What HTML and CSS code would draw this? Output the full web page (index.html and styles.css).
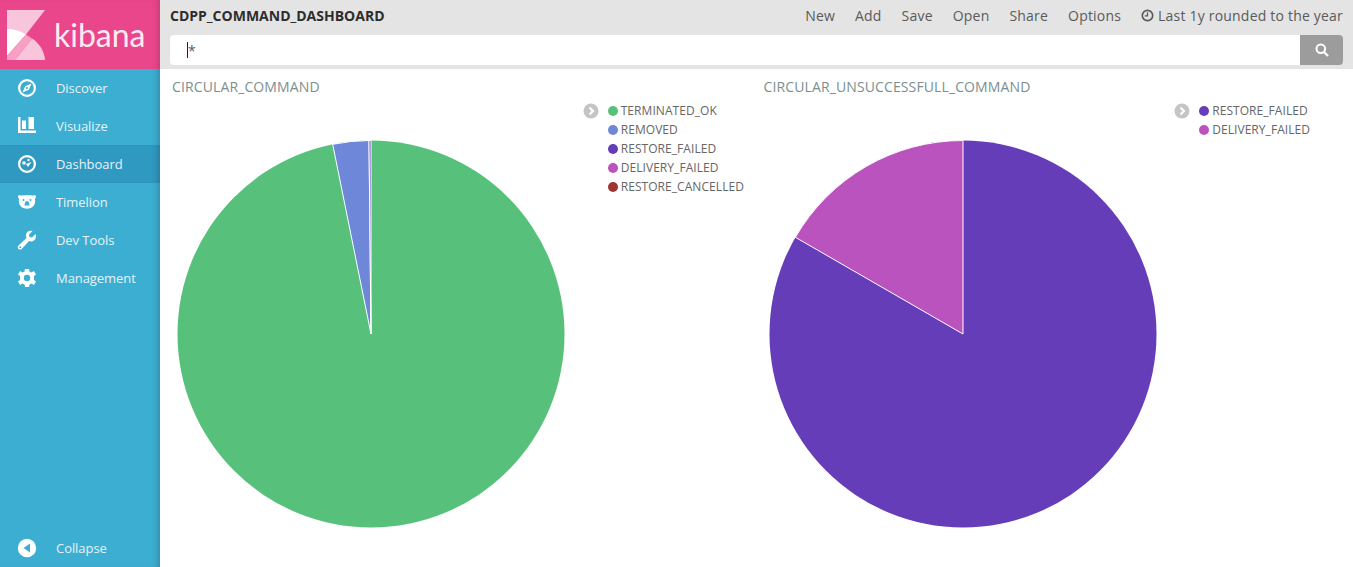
FILE: index.html
```html
<!DOCTYPE html>
<html lang="en">

<head>
    <meta charset="UTF-8">
    <title>CDPP_COMMAND_DASHBOARD - Kibana</title>
    <link rel="stylesheet" href="styles.css">
</head>

<body>
    <aside class="sidebar">
        <div class="logo">
            <svg class="logo-mark" viewBox="0 0 38 50" width="38" height="50">
                <polygon points="0,0 38,0 19,24.500 0,19" fill="#f9c5dc" />
                <path d="M0 19 C7 19 14 21 19 24.500 L0 46 Z" fill="#fff" />
                <path d="M25 28.500 C32 33 37.500 41 38 50 L8 50 Z" fill="#f9c5dc" />
                <polygon points="19,24.500 25,28.500 8,50 0,50 0,46" fill="#f5a0c4" />
            </svg>
            <span class="logo-text">kibana</span>
        </div>
        <nav class="nav">
            <a class="nav-item">
                <svg class="nav-icon" viewBox="0 0 20 20"><circle cx="10" cy="10" r="7.900" fill="none" stroke="#fff" stroke-width="2.200" /><path d="M14.500 5.500 L11.800 11.800 L5.500 14.500 L8.200 8.200 Z M10 9 A1 1 0 1 0 10 11 A1 1 0 1 0 10 9 Z" fill="#fff" fill-rule="evenodd" /></svg>
                Discover
            </a>
            <a class="nav-item">
                <svg class="nav-icon" viewBox="0 0 20 20"><path d="M1 1 H3.500 V14.500 H19 V17 H1 Z" fill="#fff" /><path d="M5 4.500 H9 V13 H5 Z M11.500 1 H17 V13 H11.500 Z" fill="#fff" /></svg>
                Visualize
            </a>
            <a class="nav-item active">
                <svg class="nav-icon" viewBox="0 0 20 20"><circle cx="10" cy="10" r="7.900" fill="none" stroke="#fff" stroke-width="2.200" /><circle cx="7" cy="9" r="1.800" fill="#fff" /><circle cx="11.500" cy="6" r="1.200" fill="#fff" /><path d="M9 10 L14.500 8 L11 13 Z" fill="#fff" /></svg>
                Dashboard
            </a>
            <a class="nav-item">
                <svg class="nav-icon" viewBox="0 0 20 20"><path d="M1 4.500 C1 3.300 2.500 2.800 3.500 3.500 C7 3 13 3 16.500 3.500 C17.500 2.800 19 3.300 19 4.500 C19 5.500 18.500 6 18 6.500 C18.500 10 18 13 15.500 15 C12.500 17.200 7.500 17.200 4.500 15 C2 13 1.500 10 2 6.500 C1.500 6 1 5.500 1 4.500 Z" fill="#fff" /><circle cx="6.500" cy="8" r="1" fill="#3caed2" /><circle cx="13.500" cy="8" r="1" fill="#3caed2" /><path d="M10 9 C11.500 9 12.500 11 12.500 13.500 H7.500 C7.500 11 8.500 9 10 9 Z" fill="#3caed2" /></svg>
                Timelion
            </a>
            <a class="nav-item">
                <svg class="nav-icon" viewBox="0 0 20 20"><path d="M18.500 4 L15 7.500 L12.500 7 L12 4.500 L15.500 1 C12.500 0 9.500 1.500 9 4.500 C8.800 5.800 9 7 9.500 8 L1.500 15.500 C0.300 16.700 0.800 18.300 1.500 19 C2.400 19.800 3.800 19.800 4.700 19 L12 11 C13.200 11.500 14.500 11.600 15.700 11.200 C18.500 10.200 19.700 7 18.500 4 Z" fill="#fff" /><circle cx="3.200" cy="17.300" r="1" fill="#3caed2" /></svg>
                Dev Tools
            </a>
            <a class="nav-item">
                <svg class="nav-icon" viewBox="0 0 20 20"><path d="M8 1 H12 L12.500 3.600 L14.600 4.500 L16.900 3.100 L19 6.500 L16.900 8 V12 L19 13.500 L16.900 16.900 L14.600 15.500 L12.500 16.400 L12 19 H8 L7.500 16.400 L5.400 15.500 L3.100 16.900 L1 13.500 L3.100 12 V8 L1 6.500 L3.100 3.100 L5.400 4.500 L7.500 3.600 Z" fill="#fff" /><circle cx="10" cy="10" r="3.200" fill="#3caed2" /></svg>
                Management
            </a>
        </nav>
        <a class="nav-item collapse">
            <svg class="nav-icon" viewBox="0 0 20 20"><circle cx="10" cy="10" r="9.200" fill="#fff" /><path d="M13 5.500 V14.500 L6.500 10 Z" fill="#3caed2" /></svg>
            Collapse
        </a>
    </aside>

    <main class="content">
        <header class="topbar">
            <div class="topbar-row">
                <span class="dash-title">CDPP_COMMAND_DASHBOARD</span>
                <div class="menu">
                    <a>New</a>
                    <a>Add</a>
                    <a>Save</a>
                    <a>Open</a>
                    <a>Share</a>
                    <a>Options</a>
                    <a class="time">
                        <svg viewBox="0 0 14 14" width="13" height="13"><circle cx="7" cy="7" r="5.600" fill="none" stroke="#5a5a5a" stroke-width="1.800" /><path d="M7 3.500 V7.500 H4" fill="none" stroke="#5a5a5a" stroke-width="1.400" /></svg>
                        Last 1y rounded to the year
                    </a>
                </div>
            </div>
            <div class="search">
                <div class="search-input"><span class="caret"></span>*</div>
                <button class="search-button">
                    <svg viewBox="0 0 14 14" width="14" height="14"><circle cx="5.800" cy="5.800" r="4.300" fill="none" stroke="#fff" stroke-width="2" /><path d="M9 9 L13 13" stroke="#fff" stroke-width="2.400" /></svg>
                </button>
            </div>
        </header>

        <section class="panels">
            <div class="panel">
                <h2 class="panel-title">CIRCULAR_COMMAND</h2>
                <div class="panel-body">
                    <div class="chart">
                        <svg viewBox="-194 -194 388 388" width="388" height="388">
                            <circle r="193.500" fill="#57c17b" />
                            <path d="M0 0 L-38.300 -189.700 A193.500 193.500 0 0 1 -2 -193.500 Z" fill="#6f87d8" stroke="#fff" />
                            <path d="M0 0 L-2 -193.500 A193.500 193.500 0 0 1 0 -193.500 Z" fill="#663db8" stroke="#fff" />
                        </svg>
                    </div>
                    <div class="legend">
                        <span class="legend-toggle"><svg viewBox="0 0 16 16" width="16" height="16"><circle cx="8" cy="8" r="7.500" fill="#c4c4c4" /><path d="M6.500 4.500 L10 8 L6.500 11.500" fill="none" stroke="#fff" stroke-width="2.200" /></svg></span>
                        <ul class="legend-list">
                            <li><i class="dot green"></i>TERMINATED_OK</li>
                            <li><i class="dot blue"></i>REMOVED</li>
                            <li><i class="dot purple"></i>RESTORE_FAILED</li>
                            <li><i class="dot magenta"></i>DELIVERY_FAILED</li>
                            <li><i class="dot red"></i>RESTORE_CANCELLED</li>
                        </ul>
                    </div>
                </div>
            </div>
            <div class="panel">
                <h2 class="panel-title">CIRCULAR_UNSUCCESSFULL_COMMAND</h2>
                <div class="panel-body">
                    <div class="chart">
                        <svg viewBox="-194 -194 388 388" width="388" height="388">
                            <circle r="193.500" fill="#663db8" />
                            <path d="M0 0 L-167.600 -96.700 A193.500 193.500 0 0 1 0 -193.500 Z" fill="#ba53bd" stroke="#fff" />
                        </svg>
                    </div>
                    <div class="legend">
                        <span class="legend-toggle"><svg viewBox="0 0 16 16" width="16" height="16"><circle cx="8" cy="8" r="7.500" fill="#c4c4c4" /><path d="M6.500 4.500 L10 8 L6.500 11.500" fill="none" stroke="#fff" stroke-width="2.200" /></svg></span>
                        <ul class="legend-list">
                            <li><i class="dot purple"></i>RESTORE_FAILED</li>
                            <li><i class="dot magenta"></i>DELIVERY_FAILED</li>
                        </ul>
                    </div>
                </div>
            </div>
        </section>
    </main>
</body>

</html>
```

FILE: styles.css
```css
html, body {
    height: 100%;
}

body {
    display: flex;
    margin: 0;
    overflow: hidden;
    background-color: #fff;
    font-family: "Open Sans", sans-serif;
    color: #5a5a5a;
}

/* sidebar */
.sidebar {
    display: flex;
    flex-direction: column;
    flex: 0 0 160px;
    height: 567px;
    background-color: #3caed2;
    box-shadow: inset -6px 0 6px -4px rgba(0, 0, 0, 0.2);
}

.logo {
    display: flex;
    align-items: center;
    gap: 9px;
    height: 69px;
    padding-left: 7px;
    background-color: #ea468b;
    box-shadow: inset -6px 0 6px -4px rgba(0, 0, 0, 0.15);
}

.logo-text {
    font-family: "Lato", sans-serif;
    font-size: 32px;
    line-height: 1;
    color: #fdeaf2;
}

.nav {
    display: flex;
    flex-direction: column;
    flex: 1;
}

.nav-item {
    display: flex;
    align-items: center;
    gap: 19px;
    height: 38px;
    padding-left: 17px;
    font-size: 13px;
    letter-spacing: -0.06px;
    color: #e4f4f9;
}

.nav-item.active {
    background-color: #2f99c1;
    box-shadow: inset -6px 0 6px -4px rgba(0, 0, 0, 0.2);
}

.nav-icon {
    flex: none;
    width: 20px;
    height: 20px;
}

/* top bar */
.content {
    flex: 1;
    min-width: 0;
}

.topbar {
    height: 69px;
    box-sizing: border-box;
    padding: 0 10px;
    background-color: #e4e4e4;
}

.topbar-row {
    display: flex;
    align-items: center;
    justify-content: space-between;
    height: 31px;
    margin-bottom: 4px;
}

.dash-title {
    font-size: 14px;
    font-weight: 700;
    color: #2d2d2d;
}

.menu {
    display: flex;
    align-items: center;
    gap: 20px;
    font-size: 14px;
    letter-spacing: 0.2px;
    color: #5a5a5a;
}

.time {
    display: flex;
    align-items: center;
    gap: 4px;
}

.search {
    display: flex;
    height: 30px;
}

.search-input {
    flex: 1;
    display: flex;
    align-items: center;
    padding-left: 17px;
    background-color: #fff;
    border-radius: 4px 0 0 4px;
    font-size: 14px;
    color: #5a5a5a;
}

.caret {
    width: 1px;
    height: 16px;
    background-color: #222;
}

.search-button {
    display: flex;
    align-items: center;
    justify-content: center;
    width: 43px;
    padding: 0;
    background-color: #9c9c9c;
    border: none;
    border-radius: 0 4px 4px 0;
}

/* panels */
.panels {
    display: grid;
    grid-template-columns: 1fr 1fr;
    padding: 0 5px;
}

.panel-title {
    margin: 0;
    padding: 8px 7px 0;
    height: 21px;
    font-size: 14px;
    font-weight: 400;
    line-height: 19px;
    letter-spacing: 0.12px;
    color: #7b8f90;
}

.panel-body {
    display: flex;
}

.chart {
    flex: 1;
    display: flex;
    justify-content: center;
    padding-top: 42px;
}

.legend {
    display: flex;
    flex: 0 0 179px;
    box-sizing: border-box;
    gap: 9px;
    padding: 3px 0 0 5.200px;
}

.legend-toggle {
    flex: none;
    height: 16px;
    margin-top: 1px;
}

.legend-list {
    margin: 0;
    padding: 0;
    list-style: none;
    font-size: 12px;
    letter-spacing: 0.06px;
    color: #666;
}

.legend-list li {
    display: flex;
    align-items: center;
    gap: 3px;
    height: 19px;
    white-space: nowrap;
}

.dot {
    width: 10px;
    height: 10px;
    border-radius: 50%;
}

.green { background-color: #57c17b; }
.blue { background-color: #6f87d8; }
.purple { background-color: #663db8; }
.magenta { background-color: #bc52bc; }
.red { background-color: #9e3533; }
```
